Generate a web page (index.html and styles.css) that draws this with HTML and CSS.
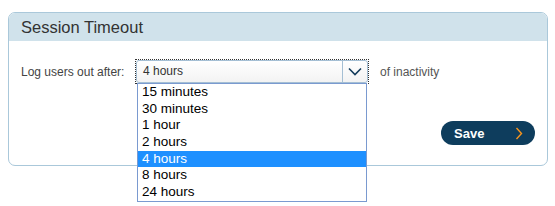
FILE: index.html
```html
<!DOCTYPE html>
<html lang="en">
    <head>
        <meta name="viewport" content="width=device-width, initial-scale=1.0">
        <title>Session Timeout</title>
        <link rel="stylesheet" href="styles.css">
    </head>
    <body>
        <div class="panel">
            <div class="panel__header">Session Timeout</div>
            <div class="panel__body">
                <div class="timeout-row">
                    <span class="timeout-row__label">Log users out after:</span>
                    <div class="dropdown">
                        <div class="dropdown__box">
                            <span class="dropdown__value">4 hours</span>
                            <span class="dropdown__arrow">
                                <svg width="14" height="9" viewBox="0 0 14 9"><path d="M1 1.5 L7 7.5 L13 1.5" fill="none" stroke="#143c5c" stroke-width="1.6"/></svg>
                            </span>
                        </div>
                        <ul class="dropdown__list">
                            <li>15 minutes</li>
                            <li>30 minutes</li>
                            <li>1 hour</li>
                            <li>2 hours</li>
                            <li class="is-selected">4 hours</li>
                            <li>8 hours</li>
                            <li>24 hours</li>
                        </ul>
                    </div>
                    <span class="timeout-row__suffix">of inactivity</span>
                </div>
                <div class="actions">
                    <button class="btn-save">
                        <span>Save</span>
                        <svg width="8" height="13" viewBox="0 0 8 13"><path d="M1.5 1 L6.5 6.5 L1.5 12" fill="none" stroke="#f7941d" stroke-width="1.4"/></svg>
                    </button>
                </div>
            </div>
        </div>
    </body>
</html>
```

FILE: styles.css
```css
html, body {
    height: 100%;
}
body {
    margin: 0;
    min-height: 206px;
    font-family: "Liberation Sans", Arial, sans-serif;
    background: #fff;
}
.panel {
    position: relative;
    width: 540px;
    margin: 12px 0 0 8px;
    border: 1px solid #aac8da;
    border-radius: 7px;
    box-sizing: border-box;
}
.panel__header {
    height: 28px;
    padding-left: 12px;
    background-color: #d0e2eb;
    border-radius: 6px 6px 0 0;
    font-size: 16.5px;
    line-height: 28px;
    color: #333;
}
.panel__body {
    padding: 19px 12px 20px 12px;
}
.timeout-row {
    display: flex;
    align-items: center;
    height: 23px;
    font-size: 12px;
    color: #444;
}
.timeout-row__label {
    width: 115px;
}
.timeout-row__suffix {
    margin-left: 12px;
    color: #555;
}
.dropdown {
    position: relative;
    width: 232px;
    height: 23px;
    outline: 1px dotted #333;
    z-index: 5;
}
.dropdown__box {
    display: flex;
    height: 100%;
    border: 1px solid #a5bfd4;
    border-radius: 3px;
    box-sizing: border-box;
    background: linear-gradient(#ffffff, #f3f3f3);
}
.dropdown__value {
    flex: 1;
    padding-left: 6px;
    line-height: 21px;
    color: #333;
}
.dropdown__arrow {
    display: flex;
    align-items: center;
    justify-content: center;
    width: 24px;
    border-left: 1px solid #a5bfd4;
}
.dropdown__list {
    position: absolute;
    top: 23px;
    left: 1px;
    width: 230px;
    margin: 0;
    padding: 0;
    list-style: none;
    background: #fff;
    border: 1px solid #7a9ad0;
    box-sizing: border-box;
    font-size: 13.5px;
    color: #000;
}
.dropdown__list li {
    height: 16.7px;
    line-height: 16.7px;
    padding-left: 4px;
}
.dropdown__list .is-selected {
    background-color: #1e90ff;
    color: #fff;
}
.actions {
    display: flex;
    justify-content: flex-end;
    margin-top: 38px;
}
.btn-save {
    display: flex;
    align-items: center;
    justify-content: space-between;
    width: 94px;
    height: 24px;
    padding: 0 12px 0 13px;
    border: none;
    border-radius: 12px;
    background-color: #0e3d5d;
    color: #fff;
    font-family: "Liberation Sans", Arial, sans-serif;
    font-size: 13px;
    font-weight: bold;
    cursor: pointer;
}
```
